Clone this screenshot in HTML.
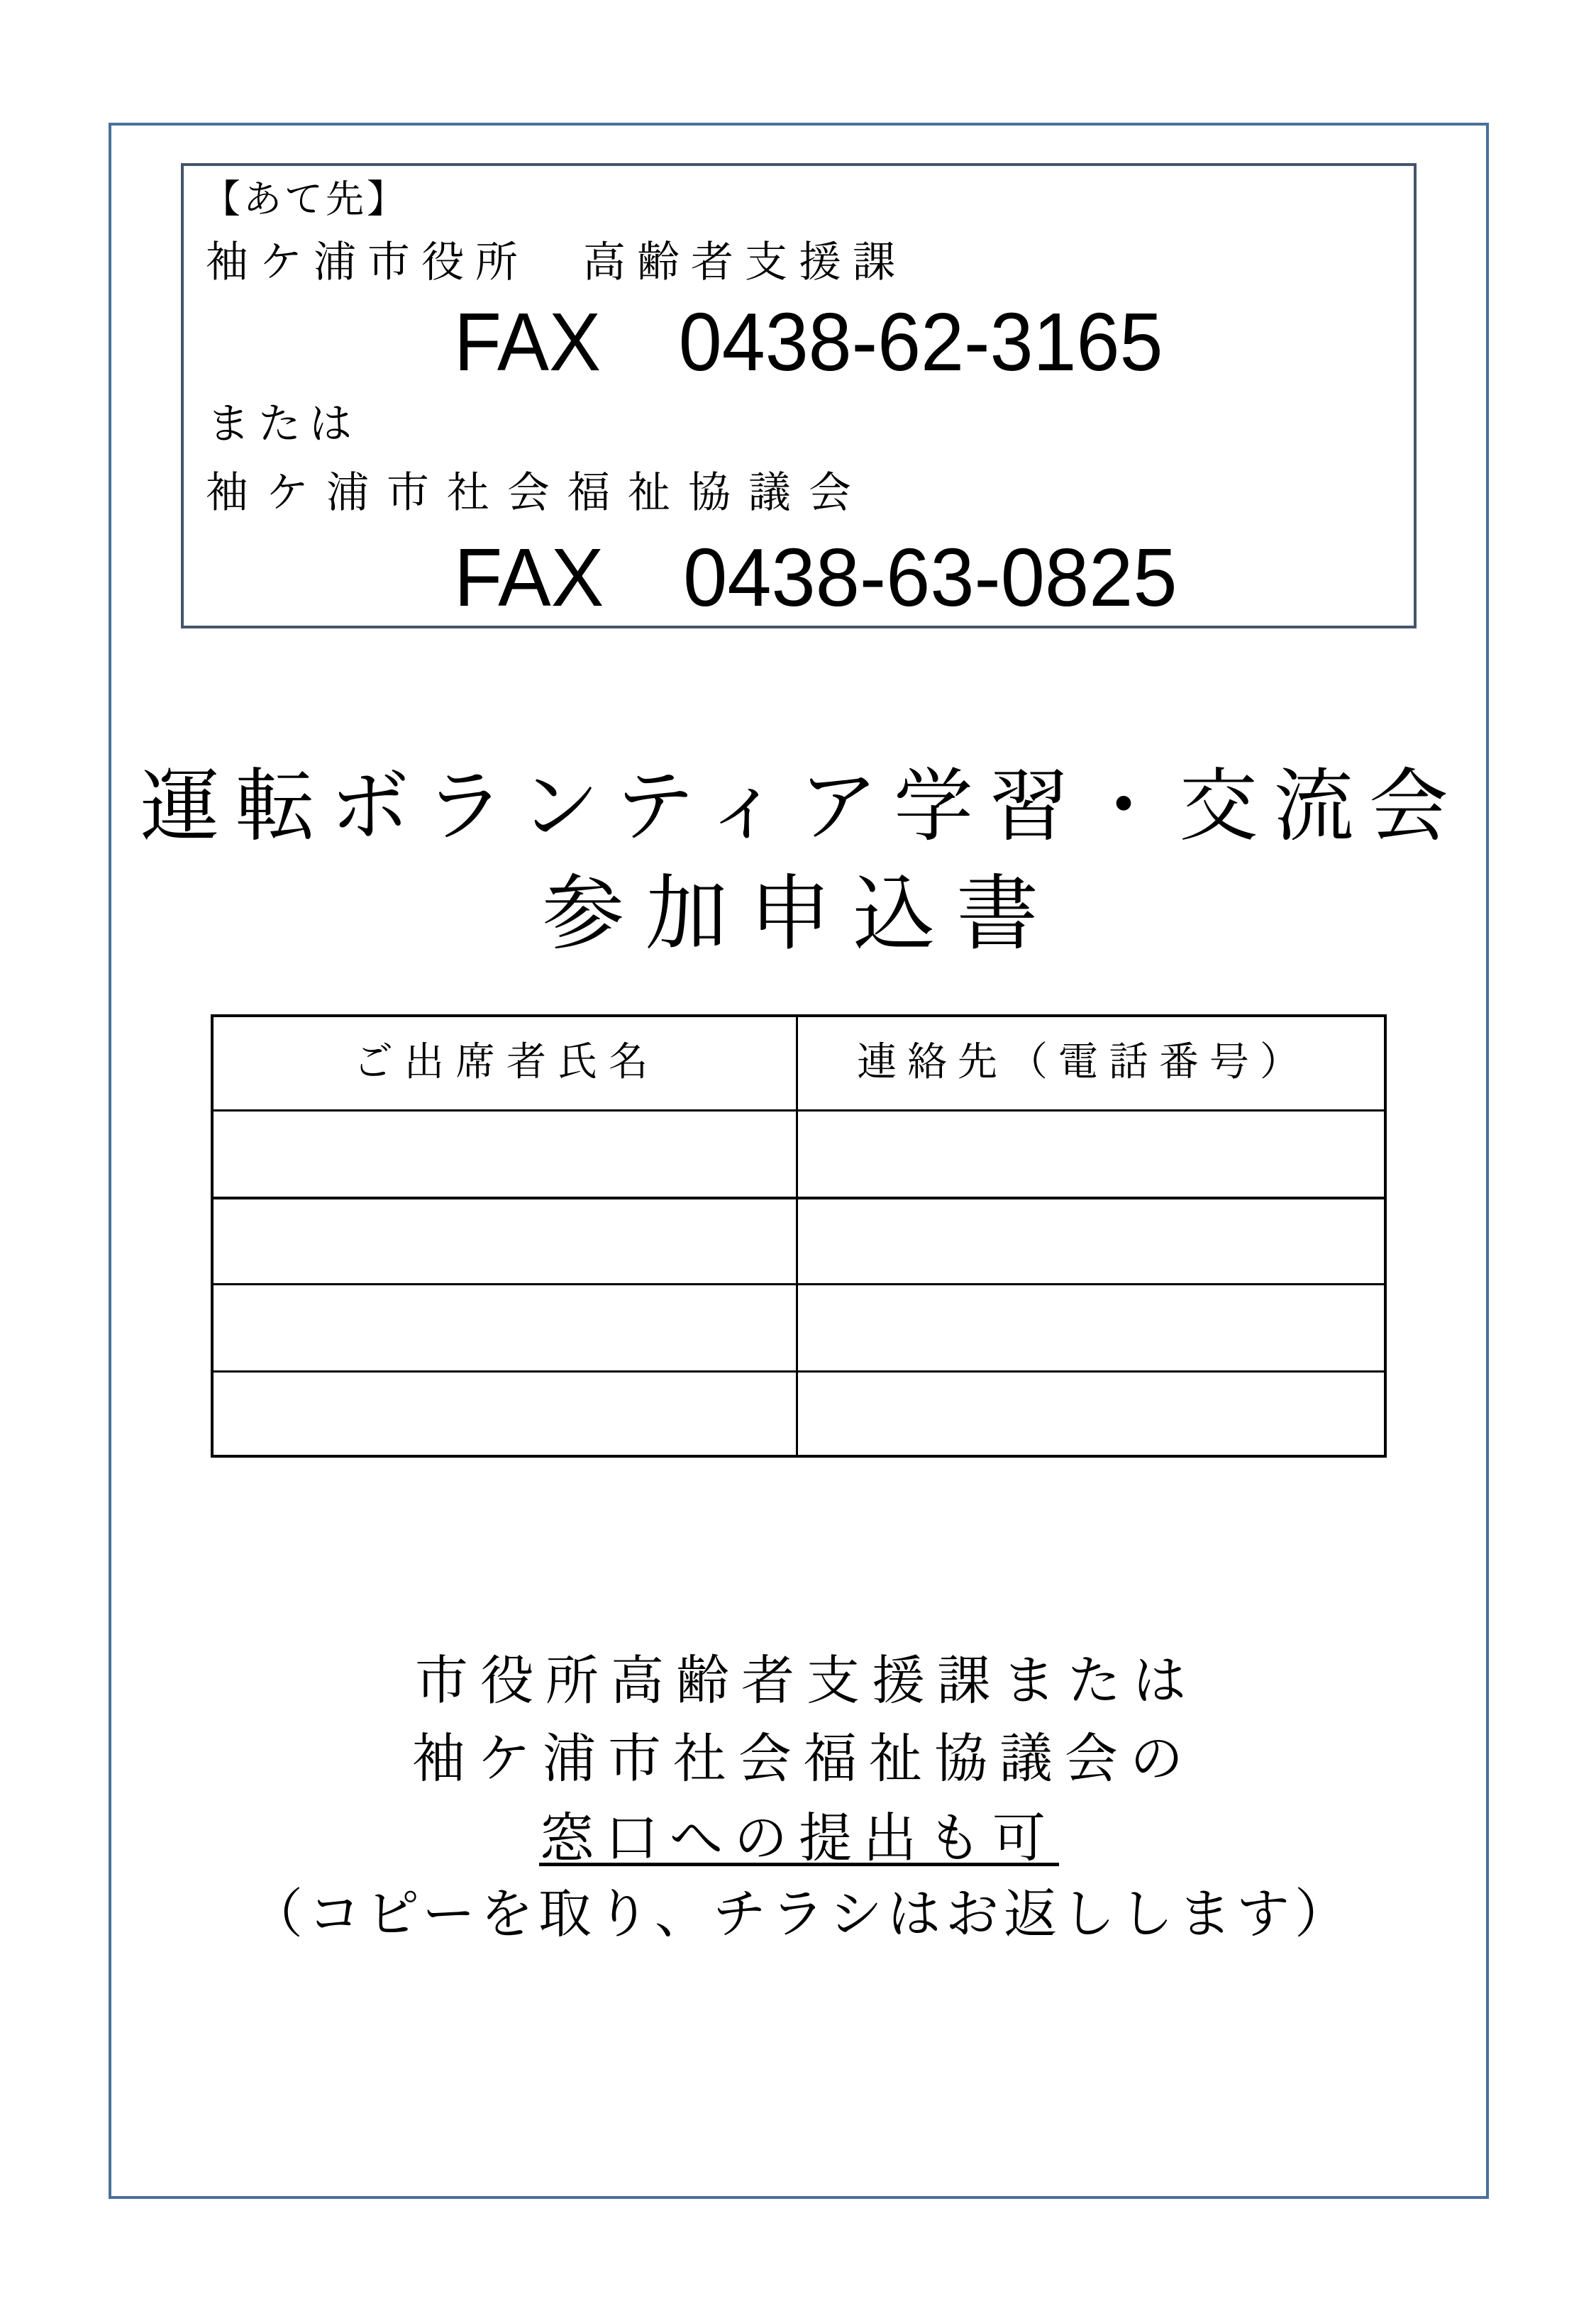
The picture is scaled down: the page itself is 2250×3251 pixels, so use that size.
<!DOCTYPE html>
<html><head><meta charset="utf-8"><style>
html,body{margin:0;padding:0;background:#fff;}
body{width:2250px;height:3251px;position:relative;overflow:hidden;font-family:"Liberation Serif","Noto Serif CJK JP","Noto Serif CJK SC",serif;color:#000;}
.a{position:absolute;white-space:nowrap;}
.fax{font-family:"Liberation Sans","Noto Sans CJK JP",sans-serif;font-size:116px;line-height:116px;transform:scaleX(0.945);transform-origin:left center;}
.h{position:absolute;background:#000;}
</style></head><body>
<div class="a" style="left:153px;top:173px;width:1938px;height:2919px;border:4px solid #4a709a;"></div>
<div class="a" style="left:255px;top:230px;width:1734px;height:648px;border:4px solid #44546a;"></div>

<div class="a" style="left:285px;top:254px;font-size:54px;line-height:54px;letter-spacing:4px;">【あて先】</div>
<div class="a" style="left:290px;top:340px;font-size:60px;line-height:60px;letter-spacing:16px;">袖ケ浦市役所　高齢者支援課</div>
<div class="a fax" style="left:640px;top:424px;">FAX　0438-62-3165</div>
<div class="a" style="left:292px;top:568px;font-size:60px;line-height:60px;letter-spacing:12px;">または</div>
<div class="a" style="left:290px;top:665px;font-size:60px;line-height:60px;letter-spacing:25px;">袖ケ浦市社会福祉協議会</div>
<div class="a fax" style="left:640px;top:756px;transform:scaleX(0.964);">FAX　0438-63-0825</div>

<div class="a" style="left:197px;top:1082px;font-size:112px;line-height:112px;letter-spacing:22px;">運転ボランティア学習・交流会</div>
<div class="a" style="left:764px;top:1232px;font-size:116px;line-height:116px;letter-spacing:30px;">参加申込書</div>

<div class="a" style="left:297px;top:1430px;width:1650px;height:617px;border:4px solid #000;"></div>
<div class="h" style="left:1122px;top:1430px;width:3px;height:623px;"></div>
<div class="h" style="left:297px;top:1564px;width:1656px;height:3px;"></div>
<div class="h" style="left:297px;top:1687px;width:1656px;height:4px;"></div>
<div class="h" style="left:297px;top:1809px;width:1656px;height:3px;"></div>
<div class="h" style="left:297px;top:1932px;width:1656px;height:3px;"></div>
<div class="a" style="left:498px;top:1470px;font-size:56px;line-height:56px;letter-spacing:16px;">ご出席者氏名</div>
<div class="a" style="left:1208px;top:1470px;font-size:56px;line-height:56px;letter-spacing:15px;">連絡先（電話番号）</div>

<div class="a" style="left:585px;top:2333px;font-size:75px;line-height:75px;letter-spacing:17px;">市役所高齢者支援課または</div>
<div class="a" style="left:581px;top:2443px;font-size:75px;line-height:75px;letter-spacing:17px;">袖ケ浦市社会福祉協議会の</div>
<div class="a" style="left:762px;top:2555px;font-size:75px;line-height:75px;letter-spacing:16px;">窓口への提出も可</div>
<div class="h" style="left:760px;top:2626px;width:733px;height:5px;"></div>
<div class="a" style="left:352px;top:2662px;font-size:75px;line-height:75px;letter-spacing:7px;">（コピーを取り、チラシはお返しします）</div>
</body></html>
